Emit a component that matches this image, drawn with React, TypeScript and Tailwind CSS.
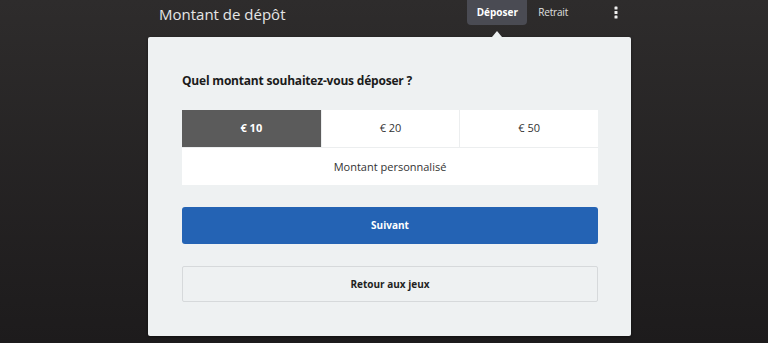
import React from "react";

export default function App() {
  const amounts = ["€ 10", "€ 20", "€ 50"];
  return (
    <div
      className="w-[768px] h-[343px] overflow-hidden bg-gradient-to-b from-[#2e2c2c] to-[#1d1b1c] flex flex-col"
      style={{ fontFamily: '"Open Sans", "Noto Sans", sans-serif' }}
    >
      {/* Header */}
      <div className="h-[37px] flex items-start pl-[159px] pr-[150px] shrink-0">
        <div className="text-[15px] leading-none text-[#e6e6e6] mt-[7px]">Montant de dépôt</div>
        <div className="ml-auto flex items-start">
          <div className="relative">
            <div className="w-[60px] h-[25px] rounded-b-[4px] bg-[#4a4b53] text-white text-[10px] font-bold flex items-center justify-center">
              Déposer
            </div>
            <div className="absolute left-[25px] top-[31px] w-0 h-0 border-l-[5px] border-r-[5px] border-b-[6px] border-l-transparent border-r-transparent border-b-[#eef1f2]" />
          </div>
          <div className="ml-[11px] h-[25px] flex items-center text-[10px] tracking-[-0.2px] text-[#e0e0e0]">Retrait</div>
          <div className="ml-[46px] h-[25px] flex items-center">
            <svg width="4" height="13" viewBox="0 0 4 13">
              <rect x="0.5" y="0.5" width="3" height="3" rx="0.6" fill="#f0f0f0" />
              <rect x="0.5" y="5" width="3" height="3" rx="0.6" fill="#f0f0f0" />
              <rect x="0.5" y="9.5" width="3" height="3" rx="0.6" fill="#f0f0f0" />
            </svg>
          </div>
        </div>
      </div>

      {/* Panel */}
      <div className="ml-[148px] w-[483px] h-[299px] bg-[#eef1f2] rounded-[2px] shadow-[0_1px_3px_rgba(0,0,0,0.5)] px-[34px] pt-[35px]">
        <div className="text-[12px] tracking-[-0.2px] font-bold text-[#1b1b1b] leading-[18px]">
          Quel montant souhaitez-vous déposer ?
        </div>
        <div className="mt-[20px] w-[416px]">
          <div className="grid grid-cols-3 h-[37px]">
            {amounts.map((a, i) => (
              <div
                key={a}
                className={
                  i === 0
                    ? "bg-[#5b5b5b] text-white font-bold text-[11px] flex items-center justify-center"
                    : "bg-white text-[#333] text-[11px] flex items-center justify-center border-l border-[#eceeef]"
                }
              >
                {a}
              </div>
            ))}
          </div>
          <div className="h-[38px] bg-white border-t border-[#eceeef] text-[11px] text-[#333] flex items-center justify-center pt-[1px]">
            Montant personnalisé
          </div>
        </div>
        <div className="mt-[22px] w-[416px] h-[37px] rounded-[3px] bg-[#2463b4] text-white text-[10px] font-bold flex items-center justify-center">
          Suivant
        </div>
        <div className="mt-[22px] w-[416px] h-[36px] rounded-[2px] border border-[#d6d9db] text-[#1f1f1f] text-[10px] font-bold flex items-center justify-center">
          Retour aux jeux
        </div>
      </div>
    </div>
  );
}
